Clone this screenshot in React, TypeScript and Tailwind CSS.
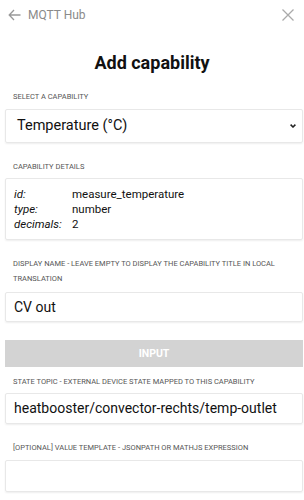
import React from "react";

function Label({ children, className = "" }: { children: React.ReactNode; className?: string }) {
  return (
    <div className={"pl-[13px] pr-[8px] text-[7.5px] leading-[15px] uppercase text-[#555] " + className}>
      {children}
    </div>
  );
}

const box =
  "ml-[5px] mr-[1px] border border-[#e8e8e8] rounded-[2px] shadow-[0_1px_2px_rgba(0,0,0,0.07)]";

export default function App() {
  return (
    <div className="w-[304px] h-[500px] bg-white overflow-hidden font-['Roboto',sans-serif] text-[#111]">
      <div className="flex items-center justify-between h-[30px] pl-[8px] pr-[10px]">
        <div className="flex items-center gap-[7px] text-[#8a8a8a]">
          <svg width="13" height="12" viewBox="0 0 13 12" fill="none" stroke="#999" strokeWidth="1.3">
            <path d="M12.5 6H1.2M6 1L1.2 6L6 11" />
          </svg>
          <span className="text-[12px]">MQTT Hub</span>
        </div>
        <svg width="12" height="12" viewBox="0 0 12 12" fill="none" stroke="#aaa" strokeWidth="1.3">
          <path d="M0.5 0.5L11.5 11.5M11.5 0.5L0.5 11.5" />
        </svg>
      </div>
      <div className="text-center font-bold text-[18px] leading-[24px] mt-[21px] text-[#111]">Add capability</div>
      <Label className="mt-[14px]">Select a capability</Label>
      <div className={box + " mt-[5px] h-[34px] flex items-center justify-between pl-[11px] pr-[6px]"}>
        <span className="text-[14.5px]">Temperature (°C)</span>
        <svg width="6" height="4" viewBox="0 0 6 4" fill="none" stroke="#222" strokeWidth="1.5">
          <path d="M0.6 0.6L3 3L5.4 0.6" />
        </svg>
      </div>
      <Label className="mt-[16px]">Capability details</Label>
      <div className={box + " mt-[4px] h-[62px] pl-[8px] pt-[8px] text-[11.5px] leading-[15px]"}>
        <div className="grid grid-cols-[58px_1fr]">
          <span className="italic">id:</span>
          <span>measure_temperature</span>
          <span className="italic">type:</span>
          <span>number</span>
          <span className="italic">decimals:</span>
          <span>2</span>
        </div>
      </div>
      <Label className="mt-[16px]">
        Display name - leave empty to display the capability title in local translation
      </Label>
      <div className={box + " mt-[6px] h-[30px] flex items-center pl-[8px]"}>
        <span className="text-[14px]">CV out</span>
      </div>
      <div className="ml-[5px] mr-[1px] mt-[18px] h-[27px] bg-[#d3d3d3] flex items-center justify-center text-white font-bold text-[10.5px]">
        INPUT
      </div>
      <Label className="mt-[7px]">State topic - external device state mapped to this capability</Label>
      <div className={box + " mt-[4px] h-[31px] flex items-center pl-[8px]"}>
        <span className="text-[14px] whitespace-nowrap">heatbooster/convector-rechts/temp-outlet</span>
      </div>
      <Label className="mt-[16px]">[optional] value template - JSONpath or MathJS expression</Label>
      <div className={box + " mt-[5px] h-[32px]"} />
    </div>
  );
}
